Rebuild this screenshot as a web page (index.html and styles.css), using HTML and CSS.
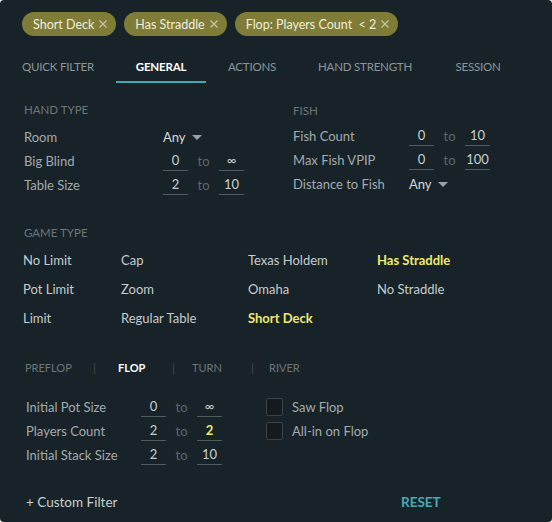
FILE: index.html
```html
<!DOCTYPE html>
<html>
<head>
<meta charset="utf-8">
<link rel="stylesheet" href="styles.css">
</head>
<body>
<div class="panel">
  <div class="chips">
    <span class="chip">Short Deck <svg class="x" viewBox="0 0 8 8"><path d="M0.5 0.5L7.5 7.5M7.5 0.5L0.5 7.5"/></svg></span>
    <span class="chip">Has Straddle <svg class="x" viewBox="0 0 8 8"><path d="M0.5 0.5L7.5 7.5M7.5 0.5L0.5 7.5"/></svg></span>
    <span class="chip">Flop: Players Count&nbsp; &lt; 2 <svg class="x" viewBox="0 0 8 8"><path d="M0.5 0.5L7.5 7.5M7.5 0.5L0.5 7.5"/></svg></span>
  </div>
  <div class="tabs">
    <span class="tab t1">QUICK FILTER</span>
    <span class="tab t2 active">GENERAL</span>
    <span class="tab t3">ACTIONS</span>
    <span class="tab t4">HAND STRENGTH</span>
    <span class="tab t5">SESSION</span>
  </div>
  <div class="top">
    <div class="col hand">
      <div class="head">HAND TYPE</div>
      <div class="row"><span class="lbl">Room</span><span class="any">Any <span class="caret"></span></span></div>
      <div class="row"><span class="lbl">Big Blind</span><span class="inp">0</span><span class="to">to</span><span class="inp">∞</span></div>
      <div class="row"><span class="lbl">Table Size</span><span class="inp">2</span><span class="to">to</span><span class="inp">10</span></div>
    </div>
    <div class="col fish">
      <div class="head">FISH</div>
      <div class="row"><span class="lbl">Fish Count</span><span class="inp">0</span><span class="to">to</span><span class="inp">10</span></div>
      <div class="row"><span class="lbl">Max Fish VPIP</span><span class="inp">0</span><span class="to">to</span><span class="inp">100</span></div>
      <div class="row"><span class="lbl">Distance to Fish</span><span class="any">Any <span class="caret"></span></span></div>
    </div>
  </div>
  <div class="game">
    <div class="head">GAME TYPE</div>
    <div class="grid">
      <span>No Limit</span><span>Cap</span><span>Texas Holdem</span><span class="sel">Has Straddle</span>
      <span>Pot Limit</span><span>Zoom</span><span>Omaha</span><span>No Straddle</span>
      <span>Limit</span><span>Regular Table</span><span class="sel">Short Deck</span><span></span>
    </div>
  </div>
  <div class="streets">
    <span class="st s1">PREFLOP</span><span class="bar b1">|</span>
    <span class="st s2">FLOP</span><span class="bar b2">|</span>
    <span class="st s3">TURN</span><span class="bar b3">|</span>
    <span class="st s4">RIVER</span>
  </div>
  <div class="flop">
    <div class="fcol">
      <div class="frow"><span class="flbl">Initial Pot Size</span><span class="inp">0</span><span class="to">to</span><span class="inp">∞</span></div>
      <div class="frow"><span class="flbl">Players Count</span><span class="inp">2</span><span class="to">to</span><span class="inp hi">2</span></div>
      <div class="frow"><span class="flbl">Initial Stack Size</span><span class="inp">2</span><span class="to">to</span><span class="inp">10</span></div>
    </div>
    <div class="checks">
      <div class="crow"><span class="box"></span>Saw Flop</div>
      <div class="crow"><span class="box"></span>All-in on Flop</div>
    </div>
  </div>
  <div class="foot">
    <span class="custom">+ Custom Filter</span>
    <span class="reset">RESET</span>
  </div>
</div>
</body>
</html>
```

FILE: styles.css
```css
html, body {
  margin: 0;
  padding: 0;
  background: #ffffff;
}
body {
  font-family: Lato, "Open Sans", sans-serif;
  font-size: 13px;
  color: #c9cfd1;
}
.panel {
  width: 552px;
  height: 522px;
  box-sizing: border-box;
  background: #172328;
  border-radius: 4px;
  position: relative;
  overflow: hidden;
}
.chips {
  display: flex;
  gap: 8px;
  padding: 12px 0 0 22px;
}
.chip {
  display: inline-flex;
  align-items: center;
  height: 24px;
  padding: 0 9px 0 11px;
  border-radius: 12px;
  background: #7f7c38;
  color: #eeeede;
  font-size: 12.5px;
  white-space: nowrap;
}
.chip .x {
  width: 8px;
  height: 8px;
  margin-left: 5px;
  stroke: #c8c7a6;
  stroke-width: 1.1;
  fill: none;
}
.tabs {
  height: 36px;
  margin-top: 13px;
  display: flex;
  font-size: 11.5px;
  letter-spacing: -0.2px;
  color: #8c9599;
  white-space: nowrap;
}
.tab {
  padding-top: 11px;
  text-align: center;
  flex: none;
}
.t1 { width: 116px; }
.t2 { width: 90px; color: #ffffff; font-weight: 700; border-bottom: 2px solid #3eaab4; height: 21px; box-sizing: content-box; }
.t3 { width: 92px; }
.t4 { width: 134px; }
.t5 { width: 92px; }
.top {
  display: flex;
  margin-top: 16px;
}
.col { display: flex; flex-direction: column; }
.hand { width: 293px; padding-left: 24px; box-sizing: border-box; }
.hand .head { margin-bottom: 4px; margin-top: 2px; }
.fish { padding-top: 3px; }
.head {
  font-size: 11.5px;
  color: #6c7679;
  height: 18px;
  margin-bottom: 2px;
}
.row {
  display: flex;
  align-items: center;
  height: 24px;
}
.lbl {
  color: #a3aaad;
  width: 139px;
}
.fish .lbl { width: 116px; }
.any {
  color: #d5dadb;
  display: inline-flex;
  align-items: center;
}
.caret {
  display: inline-block;
  width: 0; height: 0;
  border-left: 5px solid transparent;
  border-right: 5px solid transparent;
  border-top: 5px solid #9aa2a5;
  margin-left: 6px;
}
.inp {
  display: inline-block;
  width: 25px;
  text-align: center;
  border-bottom: 1px solid #4f5b5f;
  color: #c9cfd1;
  line-height: 19px;
}
.to {
  width: 31px;
  text-align: center;
  color: #5b676b;
}
.hi { color: #efe86a; font-weight: 700; }
.game {
  margin-top: 29px;
  padding-left: 24px;
}
.game .head { margin-bottom: 8px; }
.grid {
  display: grid;
  grid-template-columns: 98px 127px 129px 120px;
  grid-auto-rows: 29px;
  margin-left: -1px;
  color: #c6cbcd;
}
.grid .sel { color: #eee96b; font-weight: 700; }
.streets {
  margin-top: 19px;
  padding-left: 25px;
  display: flex;
  font-size: 11px;
  color: #6c7679;
  height: 18px;
  align-items: center;
}
.st, .bar { flex: none; }
.bar { color: #3f4a4e; font-size: 12px; }
.s1 { width: 68px; }
.b1 { width: 25px; }
.s2 { width: 54px; color: #ffffff; font-weight: 700; }
.b2 { width: 20px; }
.s3 { width: 59px; }
.b3 { width: 18px; }
.flop {
  display: flex;
  margin-top: 19px;
}
.fcol {
  width: 266px;
  padding-left: 26px;
  box-sizing: border-box;
}
.frow {
  display: flex;
  align-items: center;
  height: 24px;
}
.flbl { width: 115px; color: #a3aaad; }
.crow {
  display: flex;
  align-items: center;
  height: 24px;
  color: #a3aaad;
}
.box {
  width: 15px;
  height: 16px;
  border: 1px solid #3a4549;
  border-radius: 2px;
  background: #131b1f;
  margin-right: 9px;
}
.foot {
  margin-top: 27px;
  padding-left: 26px;
  display: flex;
  font-size: 13.5px;
}
.custom { color: #c9cfd1; width: 375px; }
.reset { color: #48aab3; font-weight: 700; font-size: 13.5px; }
```
